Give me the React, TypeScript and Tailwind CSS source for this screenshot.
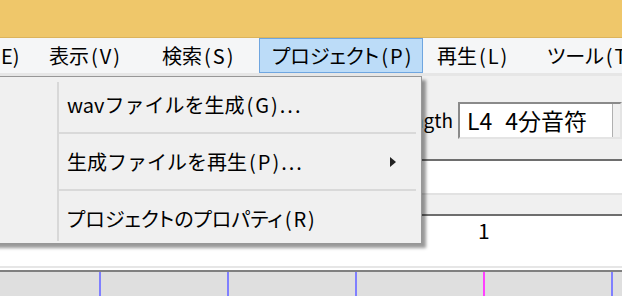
import React from 'react';

const MENUS = [
  { label: 'E)', w: 'w-[35px] pl-0', active: false },
  { label: '表示(V)', w: 'w-[113px] pl-[13px]', active: false },
  { label: '検索(S)', w: 'w-[111px] pl-[13px]', active: false },
  { label: 'プロジェクト(P)', w: 'w-[164px] pl-[12px]', active: true },
  { label: '再生(L)', w: 'w-[110px] pl-[13px]', active: false },
  { label: 'ツール(T)', w: 'w-[100px] pl-[13px]', active: false },
];

const MENU_ITEMS = [
  { label: 'wavファイルを生成(G)...', sub: false, h: 'h-[55px]', narrow: false },
  { label: '生成ファイルを再生(P)...', sub: true, h: 'h-[55px]', narrow: false },
  { label: 'プロジェクトのプロパティ(R)', sub: false, h: 'flex-1 pt-[4px]', narrow: true },
];

// Beat ticks along the bottom ruler
const TICKS = [
  { x: 'left-[99px]', color: 'bg-[#7f7fff]' },
  { x: 'left-[227px]', color: 'bg-[#7f7fff]' },
  { x: 'left-[355px]', color: 'bg-[#7f7fff]' },
  { x: 'left-[483px]', color: 'bg-[#ff40ff]' },
  { x: 'left-[611px]', color: 'bg-[#7f7fff]' },
];

// Windows UI font keeps small kana narrow and pads the "(X)" accelerator wide
function Label({ text, narrow = true }: { text: string; narrow?: boolean }) {
  const i = text.indexOf('(');
  const main = i >= 0 ? text.slice(0, i) : text;
  const rest = i >= 0 ? text.slice(i) : '';
  return (
    <span className={`whitespace-nowrap ${narrow ? "[font-feature-settings:'palt']" : ''}`}>
      {main}
      {rest && <span className="ml-[2px] tracking-[2px]">{rest}</span>}
    </span>
  );
}

export default function App() {
  return (
    <div
      className="relative w-[622px] h-[296px] overflow-hidden bg-white text-black"
      style={{ fontFamily: '"Noto Sans CJK JP", "Noto Sans", sans-serif' }}
    >
      {/* Title bar */}
      <div className="h-[38px] bg-[#efc76a] border-b border-[#dcb45c]" />

      {/* Menu bar */}
      <div className="flex h-[35px] bg-[#f5f6f7] text-[20px] leading-none">
        {MENUS.map((m) => (
          <div
            key={m.label}
            className={`flex shrink-0 items-center ${m.w} ${
              m.active ? 'bg-[#bcdcf8] border border-[#6fa6e0]' : 'border border-transparent'
            }`}
          >
            <Label text={m.label} />
          </div>
        ))}
      </div>
      <div className="h-[3px] bg-[#e6e6e6]" />

      {/* Toolbar */}
      <div className="flex items-center justify-end h-[83px] bg-[#f0f0f0]">
        <span className="text-[19px] mr-[5px] mt-[6px]">Length</span>
        <div className="flex items-center w-[164px] h-[37px] mt-[6px] bg-white border-2 border-t-[#8a8a8a] border-l-[#8a8a8a] border-b-[#e4e4e4] border-r-[#e4e4e4] text-[23px] leading-none">
          <span className="pl-[7px]">L4</span>
          <span className="ml-[13px]">4分音符</span>
          <div className="ml-auto w-[8px] h-full border-l border-[#b0b0b0] bg-[#f0f0f0]" />
        </div>
      </div>

      <div className="h-[2px] bg-[#6e6e6e]" />
      <div className="h-[32px] bg-white" />
      <div className="h-[2px] bg-[#e2e2e2]" />
      <div className="h-[19px] bg-[#f0f0f0]" />
      <div className="h-[2px] bg-[#6e6e6e]" />

      {/* Measure numbers */}
      <div className="relative h-[50px] bg-white">
        <span className="absolute left-[478px] top-[2px] text-[21px] leading-[24px]">1</span>
      </div>
      <div className="h-[2px] bg-[#e6e6e6]" />
      <div className="h-[2px] bg-white" />
      <div className="h-[2px] bg-[#808080]" />

      {/* Ruler */}
      <div className="relative h-[24px] bg-[#dfdfdf]">
        {TICKS.map((t, i) => (
          <div key={i} className={`absolute top-0 bottom-0 w-[2px] ${t.x} ${t.color}`} />
        ))}
      </div>

      {/* Dropdown menu */}
      <div className="absolute left-[-10px] top-[76px] w-[432px] h-[168px] bg-[#f0f0f0] border border-[#979797] shadow-[4px_4px_3px_rgba(0,0,0,0.4)] text-[20px] leading-none">
        <div className="absolute left-[66px] top-[5px] bottom-[2px] w-[2px] bg-[#d8d8d8]" />
        <div className="flex flex-col h-full pl-[76px] pr-[5px]">
          {MENU_ITEMS.map((item, i) => (
            <React.Fragment key={item.label}>
              {i > 0 && <div className="h-[2px] shrink-0 ml-[-9px] bg-[#d9d9d9]" />}
              <div className={`flex items-center ${item.h}`}>
                <Label text={item.label} narrow={item.narrow} />
                {item.sub && (
                  <svg className="ml-auto mr-[20px]" width="6" height="10" viewBox="0 0 6 10">
                    <path d="M0 0 L6 5 L0 10 Z" fill="#222" />
                  </svg>
                )}
              </div>
            </React.Fragment>
          ))}
        </div>
      </div>
    </div>
  );
}
